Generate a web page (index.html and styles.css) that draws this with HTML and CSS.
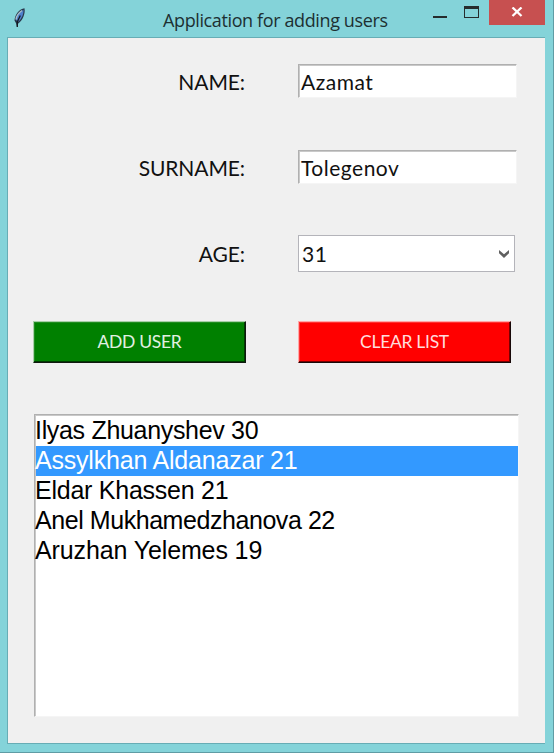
FILE: index.html
```
<!DOCTYPE html>
<html lang="en">
<head>
<meta charset="utf-8">
<title>Application for adding users</title>
<link rel="stylesheet" href="styles.css">
</head>
<body>
<div class="window">
  <header class="titlebar">
    <svg class="feather" width="12" height="20" viewBox="0 0 12 20">
      <path d="M10.500.2C5.500 1 1 6 .5 12.500L2.200 15.500L3 19L4.200 15.500C8.500 12.500 11.500 6 10.500.2Z" fill="#27364a"/>
      <path d="M9.500 1.800C5.500 4 2.300 8 1.900 12L4.500 13.800C8 10.500 9.800 6 9.500 1.800Z" fill="#4f80cd"/>
      <path d="M8 2.500C4.500 5 2.300 8 2 11.500" fill="none" stroke="#a9bdcb" stroke-width="1.500"/>
      <path d="M6.300 7.500L3.300 14V19" fill="none" stroke="#15191f" stroke-width="1.300"/>
    </svg>
    <h1 class="title">Application for adding users</h1>
    <div class="controls">
      <svg class="minmax" width="46" height="20" viewBox="0 0 46 20" shape-rendering="crispEdges">
        <path d="M0 16h14v2H0zM31 6h15v12H31zM32 9v8h13V9z" fill="#262c2d" fill-rule="evenodd"/>
      </svg>
      <button class="close" aria-label="Close">
        <svg width="12" height="10" viewBox="0 0 12 10"><path d="M1.500.5L10.500 9M10.500.5L1.500 9" stroke="#fff" stroke-width="2.300"/></svg>
      </button>
    </div>
  </header>
  <main class="client">
    <div class="form">
      <label class="label">NAME:</label>
      <div class="entry">Azamat</div>
      <label class="label">SURNAME:</label>
      <div class="entry">Tolegenov</div>
      <label class="label age">AGE:</label>
      <div class="combo"><span>31</span>
        <svg width="10" height="8" viewBox="0 0 10 8"><path d="M0 0L5 4.300L10 0V3.200L5 8L0 3.200Z" fill="#606060"/></svg>
      </div>
    </div>
    <div class="actions">
      <button class="btn add">ADD USER</button>
      <button class="btn clear">CLEAR LIST</button>
    </div>
    <ul class="list">
      <li class="snug">Ilyas Zhuanyshev 30</li>
      <li class="selected">Assylkhan Aldanazar 21</li>
      <li>Eldar Khassen 21</li>
      <li class="tight">Anel Mukhamedzhanova 22</li>
      <li class="loose">Aruzhan Yelemes 19</li>
    </ul>
  </main>
</div>
</body>
</html>
```
FILE: styles.css
```
* { box-sizing: border-box; }
body { margin: 0; font-family: Lato, sans-serif; color: #111; }
.window {
  width: 554px;
  height: 753px;
  padding: 0 8px 8px 7px;
  background: #84d3d9;
  border: solid #5f9ca4;
  border-width: 0 1px 1px 0;
  display: flex;
  flex-direction: column;
}
.titlebar { height: 37px; display: flex; align-items: flex-start; }
.feather { margin: 8px 0 0 7px; }
.title {
  margin: 7px 0 0 137px;
  width: 240px;
  font: 400 18px/26px "Open Sans", sans-serif;
  letter-spacing: -0.38px;
  white-space: nowrap;
  color: #1d3032;
}
.controls { margin-left: auto; display: flex; }
.minmax { margin-right: 10px; }
.close {
  width: 56px;
  height: 25px;
  padding: 0 0 1px;
  border: 0;
  background: #c75050;
  display: flex;
  align-items: center;
  justify-content: center;
}
.client {
  flex: 1;
  border: 1px solid #67adb5;
  border-right: 0;
  background: #f0f0f0;
  padding: 26px 0 0 25px;
}
.form {
  display: grid;
  grid-template-columns: 212px 219px;
  grid-template-rows: 35px 34px 36px;
  row-gap: 51px;
  column-gap: 53px;
}
.label {
  text-align: right;
  font-size: 21px;
  line-height: 35px;
  letter-spacing: -0.1px;
  white-space: nowrap;
}
.age { line-height: 37px; }
.entry, .list {
  background: #fff;
  border: 1px solid;
  border-color: #b0b0b0 #f5f5f5 #f5f5f5 #b0b0b0;
  box-shadow: inset 1px 1px #c9c9c9;
}
.entry {
  height: 34px;
  font-size: 21px;
  line-height: 33px;
  letter-spacing: 0.5px;
  padding-left: 2px;
}
.combo {
  width: 217px;
  height: 37px;
  background: #fff;
  border: 1px solid #b4b4ba;
  padding: 0 5px 0 3px;
  display: flex;
  align-items: center;
  justify-content: space-between;
  font-size: 21px;
  letter-spacing: 0.5px;
}
.actions { display: flex; gap: 52px; margin-top: 50px; }
.btn {
  width: 213px;
  height: 42px;
  padding: 0;
  border: 1px solid;
  font: 17.5px/38px Lato, sans-serif;
  letter-spacing: -0.3px;
}
.add {
  background: #008000;
  color: #e2f0e2;
  border-color: #a8cfa8 #101810 #101810 #a8cfa8;
  box-shadow: inset -1px -1px #003c00, inset 1px 1px #208c20;
}
.clear {
  background: #f00;
  color: #ffdcdc;
  border-color: #ffa8a8 #180808 #180808 #ffa8a8;
  box-shadow: inset -1px -1px #780000, inset 1px 1px #ff3030;
}
.list {
  list-style: none;
  width: 485px;
  height: 303px;
  margin: 51px 0 0 1px;
  padding: 1px 0 0 1px;
  font: 25px/28px "Liberation Sans", Arial, sans-serif;
  letter-spacing: -0.25px;
  color: #000;
}
.list li { height: 30px; white-space: nowrap; text-indent: -1px; }
.list .selected { background: #3399ff; color: #fff; letter-spacing: -0.2px; }
.list .snug { letter-spacing: -0.32px; }
.list .tight { letter-spacing: -0.44px; }
.list .loose { letter-spacing: -0.12px; }
```
